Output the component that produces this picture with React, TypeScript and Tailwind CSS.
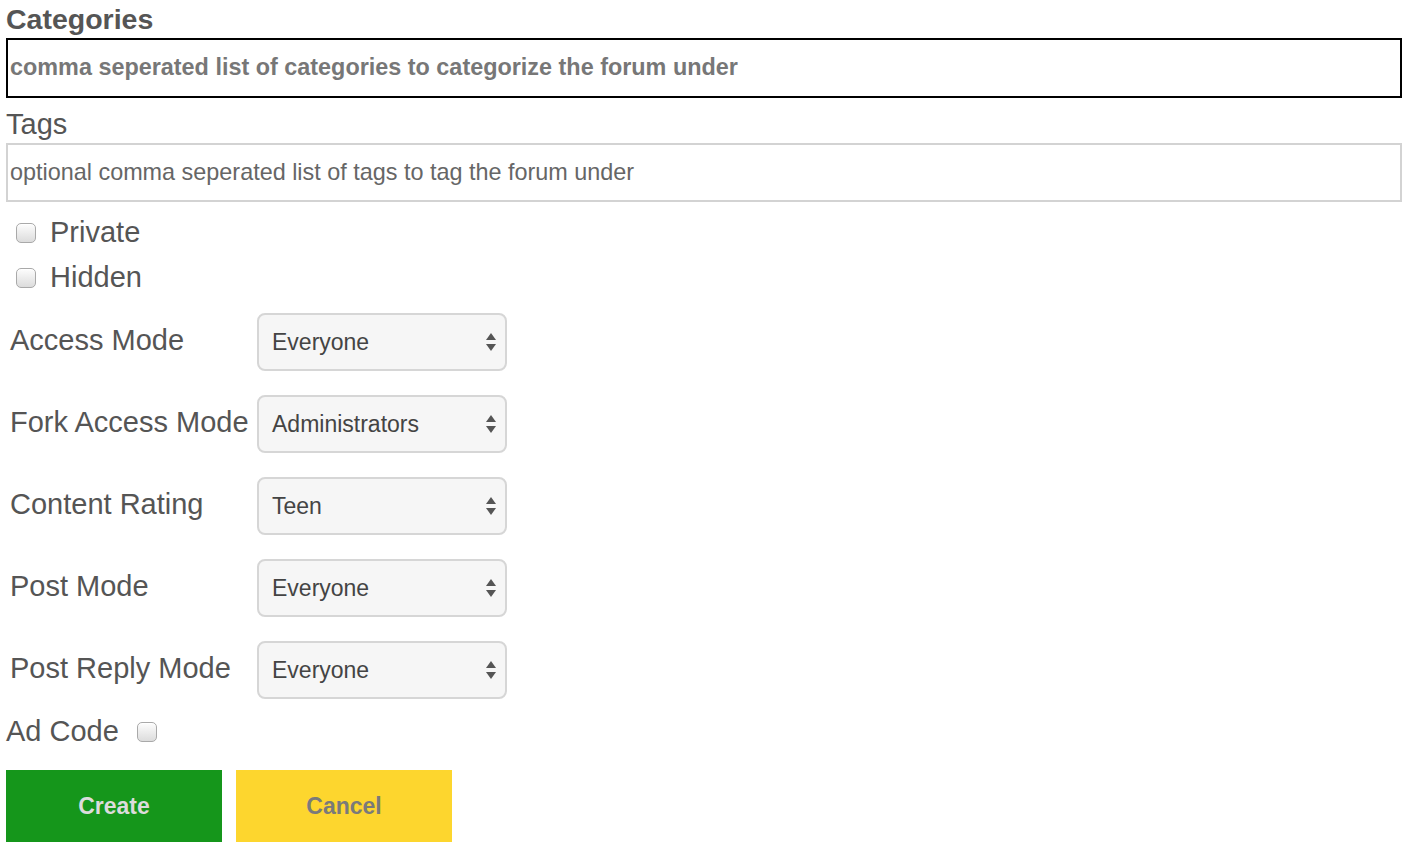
const font = { fontFamily: '"Liberation Sans", Arial, sans-serif' };

const Checkbox = () => (
  <span className="inline-block w-[20px] h-[20px] rounded-[5px] border border-[#a9a9a9] bg-gradient-to-b from-[#fdfdfd] to-[#dcdcdc] shadow-[inset_0_1px_0_#fff]" />
);

const Arrows = () => (
  <svg width="12" height="20" viewBox="0 0 12 20" className="shrink-0">
    <path d="M6 1 L11 8 L1 8 Z" fill="#555" />
    <path d="M1 12 L11 12 L6 19 Z" fill="#555" />
  </svg>
);

const rows: [string, string][] = [
  ['Access Mode', 'Everyone'],
  ['Fork Access Mode', 'Administrators'],
  ['Content Rating', 'Teen'],
  ['Post Mode', 'Everyone'],
  ['Post Reply Mode', 'Everyone'],
];

export default function App() {
  return (
    <div className="bg-white min-h-[856px] pl-[6px] pr-[12px] text-[#555]" style={font}>
      <div className="pt-[3px] leading-[32px] text-[28.5px] font-bold">Categories</div>
      <div className="mt-[3px] h-[60px] border-2 border-black flex items-center pl-[2px]">
        <span className="text-[23.4px] font-bold text-[#777]">comma seperated list of categories to categorize the forum under</span>
      </div>

      <div className="mt-[11px] leading-[32px] text-[29px] -translate-y-[1px]">Tags</div>
      <div className="mt-[2px] h-[59px] border-2 border-[#d3d3d3] flex items-center pl-[2px]">
        <span className="text-[23.4px] text-[#666]">optional comma seperated list of tags to tag the forum under</span>
      </div>

      <div className="mt-[8px]">
        {['Private', 'Hidden'].map((l) => (
          <div key={l} className="h-[45px] flex items-center pl-[10px] gap-[14px]">
            <Checkbox />
            <span className="text-[29px]">{l}</span>
          </div>
        ))}
      </div>

      <div className="mt-[1px]">
        {rows.map(([label, value]) => (
          <div key={label} className="h-[82px] flex items-center">
            <div className="w-[251px] pl-[4px] text-[29px] -mt-[3px]">{label}</div>
            <div className="w-[250px] h-[58px] rounded-[8px] border-2 border-[#d6d6d6] bg-[#f6f6f6] flex items-center justify-between pl-[13px] pr-[8px]">
              <span className="text-[23px] text-[#444]">{value}</span>
              <Arrows />
            </div>
          </div>
        ))}
      </div>

      <div className="h-[42px] flex items-center gap-[18px]">
        <span className="text-[29px]">Ad Code</span>
        <Checkbox />
      </div>

      <div className="mt-[17px] flex gap-[14px]">
        <button className="w-[216px] h-[72px] bg-[#15961b] text-[#dcdcdc] text-[23px] font-bold">Create</button>
        <button className="w-[216px] h-[72px] bg-[#fdd62e] text-[#7a7a7a] text-[23px] font-bold">Cancel</button>
      </div>
    </div>
  );
}
